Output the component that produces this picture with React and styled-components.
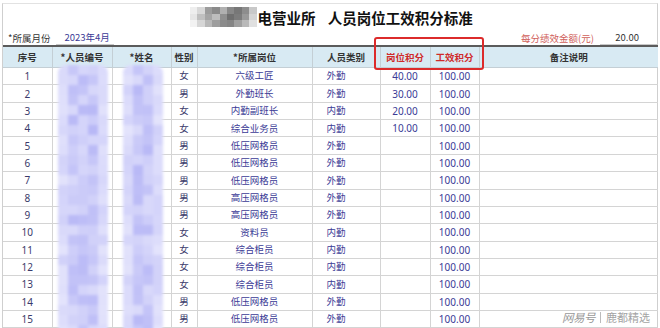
import React from 'react'
import styled, { createGlobalStyle } from 'styled-components'

const GlobalStyle = createGlobalStyle`
    html, body {
        margin: 0;
        padding: 0;
        background: #fff;
    }
    body {
        font-family: "Noto Sans CJK SC", "Noto Sans", sans-serif;
    }
`

const Page = styled.div`
    position: relative;
    width: 660px;
    height: 328px;
    overflow: hidden;
    box-sizing: border-box;
    padding: 3px 2px 0 2px;
`
const Frame = styled.div`
    border-top: 1px solid #e2e2e2;
    border-left: 1px solid #cfcfcf;
    border-right: 1px solid #cfcfcf;
    height: 100%;
    box-sizing: border-box;
`
const TitleRow = styled.div`
    height: 26px;
    display: flex;
    align-items: center;
    justify-content: flex-start;
    padding-left: 187px;
    gap: 1px;
    h1 {
        margin: 0;
        font-size: 14.5px;
        font-weight: bold;
        color: #111;
        white-space: pre;
        word-spacing: 9px;
    }
`
const MetaRow = styled.div`
    height: 15px;
    display: flex;
    align-items: center;
    justify-content: space-between;
    font-size: 9.5px;
`
const Field = styled.div`
    display: flex;
    align-items: center;
    height: 100%;
    .label {
        color: ${p => p.$red ? '#d0605a' : '#333'};
        padding: 0 ${p => p.$red ? '0' : '6px'} 0 ${p => p.$red ? '0' : '5px'};
    }
    .value {
        width: ${p => p.$w}px;
        height: 100%;
        line-height: 15px;
        border-bottom: 1px solid #c8c8c8;
        color: ${p => p.$red ? '#333' : '#3b3b96'};
        text-align: ${p => p.$red ? 'right' : 'left'};
        padding: 0 ${p => p.$red ? '18px' : '0'} 0 ${p => p.$red ? '0' : '8px'};
        box-sizing: border-box;
        margin-left: ${p => p.$red ? '6px' : '0'};
    }
`
const TableWrap = styled.div`
    position: relative;
`
const Table = styled.table`
    width: 655px;
    table-layout: fixed;
    border-collapse: collapse;
    font-size: 9.5px;
    th {
        height: 20px;
        background: #d8eaf3;
        border-top: 2px solid #5b5b5b;
        border-left: 1px solid #c4cfd5;
        border-bottom: 1px solid #c4cfd5;
        color: #333;
        font-weight: bold;
        padding: 0;
    }
    th:first-child { border-left: none; }
    td {
        height: 16.36px;
        border: 1px solid #d4d4d4;
        padding: 0;
        text-align: center;
        color: #3b3b96;
        line-height: 1;
    }
    td:first-child { border-left: none; }
    td:last-child, th:last-child { border-right: none; }
`
const HeadCell = styled.th`
    color: ${p => p.$red ? '#d02a2a' : '#333'} !important;
`
const Cell = styled.td`
    text-align: ${p => p.$align || 'center'} !important;
    padding-left: ${p => p.$pad || 0}px !important;
    color: ${p => p.$dark ? '#3a3a6a' : '#3b3b96'} !important;
    font-size: ${p => p.$num ? '10px' : 'inherit'};
    font-family: ${p => p.$num ? '"Noto Sans", "Open Sans", sans-serif' : 'inherit'};
`
const RedBox = styled.div`
    position: absolute;
    left: 374px;
    top: 37px;
    width: 110px;
    height: 33px;
    box-sizing: border-box;
    border: 2px solid #dc2b2b;
    border-radius: 3px;
    pointer-events: none;
`
const MosaicBox = styled.div`
    position: absolute;
    left: ${p => p.$x}px;
    top: ${p => p.$y}px;
    display: grid;
    grid-template-columns: repeat(${p => p.$cols}, ${p => p.$size}px);
    grid-auto-rows: ${p => p.$size}px;
    filter: blur(${p => p.$blur}px);
    border-radius: ${p => p.$radius}px;
    overflow: hidden;
    pointer-events: none;
`
const TitleMosaic = styled.div`
    display: grid;
    grid-template-columns: repeat(9, 7.4px);
    grid-auto-rows: 6.7px;
    filter: blur(0.7px);
`
const Watermark = styled.div`
    position: absolute;
    right: 10px;
    bottom: 3px;
    font-size: 11px;
    color: #a3a3a3;
    display: flex;
    align-items: center;
    gap: 5px;
    .brand {
        font-style: italic;
        font-size: 11.5px;
        letter-spacing: -0.5px;
        color: #9a9a9a;
    }
    .bar {
        width: 1px;
        height: 11px;
        background: #bbb;
    }
`

function rand(seed) {
    let s = seed
    return () => {
        s = (s * 9301 + 49297) % 233280
        return s / 233280
    }
}

const Mosaic = ({ x, y, cols, rows, size, seed, blur = 1.8, radius = 8 }) => {
    const r = rand(seed)
    const cells = []
    for (let j = 0; j < rows; j++) {
        for (let i = 0; i < cols; i++) {
            const v = r()
            const edge = i === 0 || i === cols - 1
            const l = edge ? 0.3 + v * 0.3 : 0.45 + v * 0.55
            const rg = Math.round(246 - l * 62)
            const blue = Math.round(254 - l * 8)
            cells.push(<div key={i + '-' + j} style={{ background: `rgb(${rg},${rg},${blue})` }} />)
        }
    }
    return (
        <MosaicBox $x={x} $y={y} $cols={cols} $size={size} $blur={blur} $radius={radius}>
            {cells}
        </MosaicBox>
    )
}

const titleShades = [
    '#eee', '#d8d8d8', '#9c9c9c', '#8a8a8a', '#b0b0b0', '#888', '#777', '#8d8d8d', '#c8c8c8',
    '#e6e6e6', '#c0c0c0', '#a5a5a5', '#bdbdbd', '#8f8f8f', '#6f6f6f', '#7c7c7c', '#999', '#d4d4d4',
    '#f2f2f2', '#d6d6d6', '#b8b8b8', '#9e9e9e', '#8b8b8b', '#858585', '#a0a0a0', '#b9b9b9', '#e0e0e0',
]

const rows = [
    ['女', '六级工匠', '外勤', '40.00'],
    ['男', '外勤班长', '外勤', '30.00'],
    ['女', '内勤副班长', '内勤', '20.00'],
    ['女', '综合业务员', '内勤', '10.00'],
    ['男', '低压网格员', '外勤', ''],
    ['男', '低压网格员', '外勤', ''],
    ['男', '低压网格员', '外勤', ''],
    ['男', '高压网格员', '外勤', ''],
    ['男', '高压网格员', '外勤', ''],
    ['女', '资料员', '内勤', ''],
    ['女', '综合柜员', '内勤', ''],
    ['女', '综合柜员', '内勤', ''],
    ['女', '综合柜员', '内勤', ''],
    ['男', '低压网格员', '外勤', ''],
    ['男', '低压网格员', '外勤', ''],
]

const widths = [49, 60, 59, 26, 115, 68, 50, 49, 179]

export default function App() {
    return (
        <Page>
            <GlobalStyle />
            <Frame>
                <TitleRow>
                    <TitleMosaic>
                        {titleShades.map((c, i) => <div key={i} style={{ background: c }} />)}
                    </TitleMosaic>
                    <h1>{'电营业所 人员岗位工效积分标准'}</h1>
                </TitleRow>
                <MetaRow>
                    <Field $w={58}>
                        <span className='label'>*所属月份</span>
                        <span className='value'>2023年4月</span>
                    </Field>
                    <Field $red $w={57}>
                        <span className='label'>每分绩效金额(元)</span>
                        <span className='value'>20.00</span>
                    </Field>
                </MetaRow>
                <TableWrap>
                    <Table>
                        <colgroup>
                            {widths.map((w, i) => <col key={i} style={{ width: w }} />)}
                        </colgroup>
                        <thead>
                            <tr>
                                <HeadCell>序号</HeadCell>
                                <HeadCell>*人员编号</HeadCell>
                                <HeadCell>*姓名</HeadCell>
                                <HeadCell>性别</HeadCell>
                                <HeadCell>*所属岗位</HeadCell>
                                <HeadCell>人员类别</HeadCell>
                                <HeadCell $red>岗位积分</HeadCell>
                                <HeadCell $red>工效积分</HeadCell>
                                <HeadCell>备注说明</HeadCell>
                            </tr>
                        </thead>
                        <tbody>
                            {rows.map((r, i) => (
                                <tr key={i}>
                                    <Cell $num $dark>{i + 1}</Cell>
                                    <Cell />
                                    <Cell />
                                    <Cell $dark>{r[0]}</Cell>
                                    <Cell>{r[1]}</Cell>
                                    <Cell $align='left' $pad={14}>{r[2]}</Cell>
                                    <Cell $num>{r[3]}</Cell>
                                    <Cell $num>100.00</Cell>
                                    <Cell />
                                </tr>
                            ))}
                        </tbody>
                    </Table>
                    <Mosaic x={55} y={20} cols={5} rows={27} size={10} seed={7} />
                    <Mosaic x={120} y={20} cols={4} rows={27} size={10} seed={31} />
                </TableWrap>
            </Frame>
            <RedBox />
            <Watermark>
                <span className='brand'>网易号</span>
                <span className='bar' />
                <span>鹿都精选</span>
            </Watermark>
        </Page>
    )
}
